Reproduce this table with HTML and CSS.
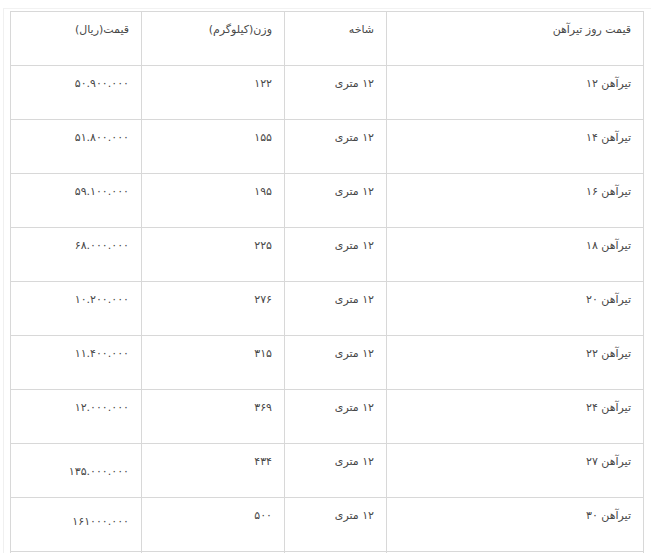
FILE: index.html
```html
<!DOCTYPE html>
<html lang="fa" dir="rtl">
<head>
<meta charset="utf-8">
<link rel="stylesheet" href="styles.css">
</head>
<body>
<div class="frame">
<table class="prices">
<colgroup>
<col class="c-name"><col class="c-len"><col class="c-wt"><col class="c-price">
</colgroup>
<tr><td>قیمت روز تیرآهن</td><td>شاخه</td><td>وزن(کیلوگرم)</td><td>قیمت(ریال)</td></tr>
<tr><td>تیرآهن ۱۲</td><td>۱۲ متری</td><td>۱۲۲</td><td>۵۰.۹۰۰.۰۰۰</td></tr>
<tr><td>تیرآهن ۱۴</td><td>۱۲ متری</td><td>۱۵۵</td><td>۵۱.۸۰۰.۰۰۰</td></tr>
<tr><td>تیرآهن ۱۶</td><td>۱۲ متری</td><td>۱۹۵</td><td>۵۹.۱۰۰.۰۰۰</td></tr>
<tr><td>تیرآهن ۱۸</td><td>۱۲ متری</td><td>۲۲۵</td><td>۶۸.۰۰۰.۰۰۰</td></tr>
<tr><td>تیرآهن ۲۰</td><td>۱۲ متری</td><td>۲۷۶</td><td>۱۰.۲۰۰.۰۰۰</td></tr>
<tr><td>تیرآهن ۲۲</td><td>۱۲ متری</td><td>۳۱۵</td><td>۱۱.۴۰۰.۰۰۰</td></tr>
<tr><td>تیرآهن ۲۴</td><td>۱۲ متری</td><td>۳۶۹</td><td>۱۲.۰۰۰.۰۰۰</td></tr>
<tr><td>تیرآهن ۲۷</td><td>۱۲ متری</td><td>۴۳۴</td><td class="low-a">۱۳۵.۰۰۰.۰۰۰</td></tr>
<tr><td>تیرآهن ۳۰</td><td>۱۲ متری</td><td>۵۰۰</td><td class="low-b">۱۶۱۰۰۰.۰۰۰</td></tr>
<tr><td></td><td></td><td></td><td></td></tr>
</table>
</div>
</body>
</html>
```
FILE: styles.css
```css
html, body {
  margin: 0;
  padding: 0;
  background: #ffffff;
  overflow: hidden;
}
body {
  font-family: "DejaVu Sans", "Noto Sans", sans-serif;
  color: #484848;
}
.frame {
  margin: 8px 0 0 3px;
  border-top: 1px solid #f2f2f2;
  border-left: 1px solid #f0f0f0;
  padding: 2px 7px 0 7px;
  width: 633px;
  height: 542px;
  overflow: hidden;
}
.prices {
  border-collapse: collapse;
  table-layout: fixed;
  width: 633px;
  direction: rtl;
}
.c-name { width: 257px; }
.c-len { width: 102px; }
.c-wt { width: 143px; }
.c-price { width: 131px; }
.prices tr { height: 54px; }
.prices td {
  border: 1px solid #d8d8d8;
  padding: 9px 12px 0 12px;
  vertical-align: top;
  text-align: right;
  font-size: 11px;
  line-height: 18px;
  white-space: nowrap;
  overflow: hidden;
}
.prices td.low-a { padding-top: 19px; }
.prices td.low-b { padding-top: 15px; }
```
